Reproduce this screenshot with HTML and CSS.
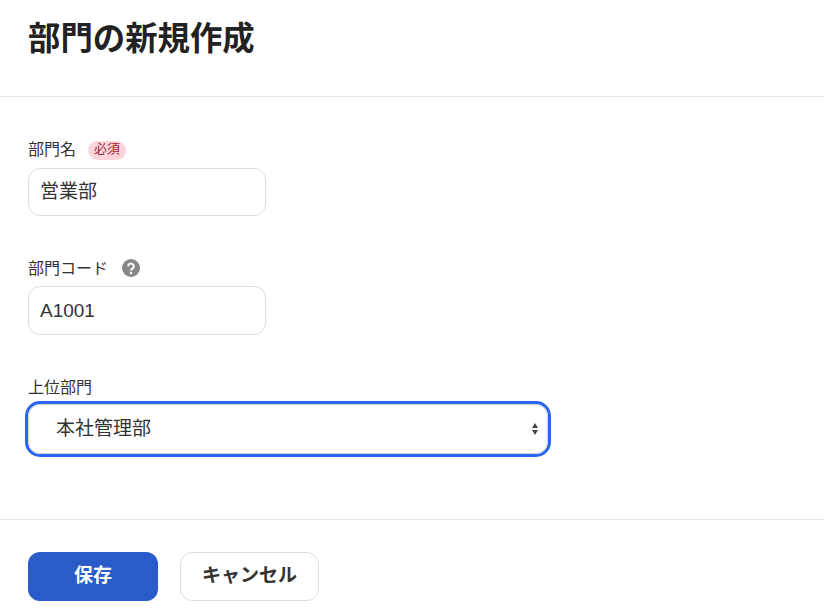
FILE: index.html
```html
<!DOCTYPE html>
<html lang="ja">
<head>
<meta charset="utf-8">
<title>部門の新規作成</title>
<link rel="stylesheet" href="styles.css">
</head>
<body>
<header class="page-header"><h1 class="title">部門の新規作成</h1></header>
<form class="form">
  <div class="field">
    <div class="label-row"><label class="label">部門名</label><span class="required">必須</span></div>
    <input class="input cjk" type="text" value="営業部">
  </div>
  <div class="field">
    <div class="label-row"><label class="label low">部門コード</label>
      <svg class="help" viewBox="0 0 18 18" width="18" height="18"><circle cx="9" cy="9" r="9" fill="#888"/><path d="M6.2 7.2a2.8 2.6 0 1 1 4.4 2.1c-1 .7-1.6 1.1-1.6 2.2" fill="none" stroke="#fff" stroke-width="2"/><circle cx="9" cy="14" r="1.25" fill="#fff"/></svg>
    </div>
    <input class="input tall" type="text" value="A1001">
  </div>
  <div class="field">
    <div class="label-row tight"><label class="label low">上位部門</label></div>
    <div class="select">
      <span class="select-value">本社管理部</span>
      <svg class="arrows" viewBox="0 0 6 12" width="6" height="12"><path d="M3 0l3 5H0zM3 12L0 7h6z" fill="#444"/></svg>
    </div>
  </div>
</form>
<footer class="actions">
  <button class="btn primary" type="button">保存</button>
  <button class="btn secondary" type="button">キャンセル</button>
</footer>
</body>
</html>
```
FILE: styles.css
```css
* { box-sizing: border-box; }
html, body { margin: 0; padding: 0; }
body {
  width: 824px;
  height: 612px;
  overflow: hidden;
  background: #fff;
  color: #333;
  font-family: "Liberation Sans", "Noto Sans CJK JP", sans-serif;
}
.page-header {
  height: 97px;
  padding: 15px 28px 0;
  border-bottom: 1px solid #e5e5e5;
}
.title {
  margin: 0;
  font-size: 32.4px;
  line-height: 48px;
  font-weight: 700;
  color: #222;
}
.form {
  height: 423px;
  padding-top: 41px;
  border-bottom: 1px solid #e5e5e5;
}
.field { padding: 0 28px; margin-bottom: 40px; }
.label-row {
  display: flex;
  align-items: center;
  height: 24px;
  margin-bottom: 6px;
}
.label-row.tight { margin-bottom: 5px; }
.label { font-size: 16px; line-height: 24px; color: #333; }
.label.low { padding-top: 2px; }
.required {
  margin-left: 12px;
  height: 19px;
  padding: 0 6px;
  border-radius: 10px;
  background: #fbd5da;
  color: #a3213a;
  font-size: 13px;
  line-height: 16px;
}
.help { margin-left: 14px; }
.input {
  display: block;
  width: 238px;
  height: 48px;
  padding: 0 11px;
  border: 1px solid #ddd;
  border-radius: 12px;
  outline: none;
  font: inherit;
  font-size: 19px;
  color: #333;
  background: #fff;
}
.input.cjk { padding-bottom: 6px; }
.input.tall { height: 49px; }
.select {
  display: flex;
  align-items: center;
  justify-content: space-between;
  width: 520px;
  height: 50px;
  padding: 0 9px 0 27px;
  border: 1px solid #d5d5d5;
  border-radius: 12px;
  outline: 3px solid #2b66f0;
  outline-offset: 0;
  font-size: 19px;
  color: #333;
  background: #fff;
}
.select-value { padding-bottom: 6px; }
.actions {
  display: flex;
  gap: 22px;
  padding: 32px 28px 0;
}
.btn {
  height: 49px;
  border-radius: 12px;
  font-family: inherit;
  font-size: 19px;
  font-weight: 700;
  padding: 0 0 6px;
}
.primary {
  width: 130px;
  border: 0;
  background: #2a5bc9;
  color: #fff;
}
.secondary {
  width: 139px;
  border: 1px solid #ddd;
  background: #fff;
  color: #333;
}
```
